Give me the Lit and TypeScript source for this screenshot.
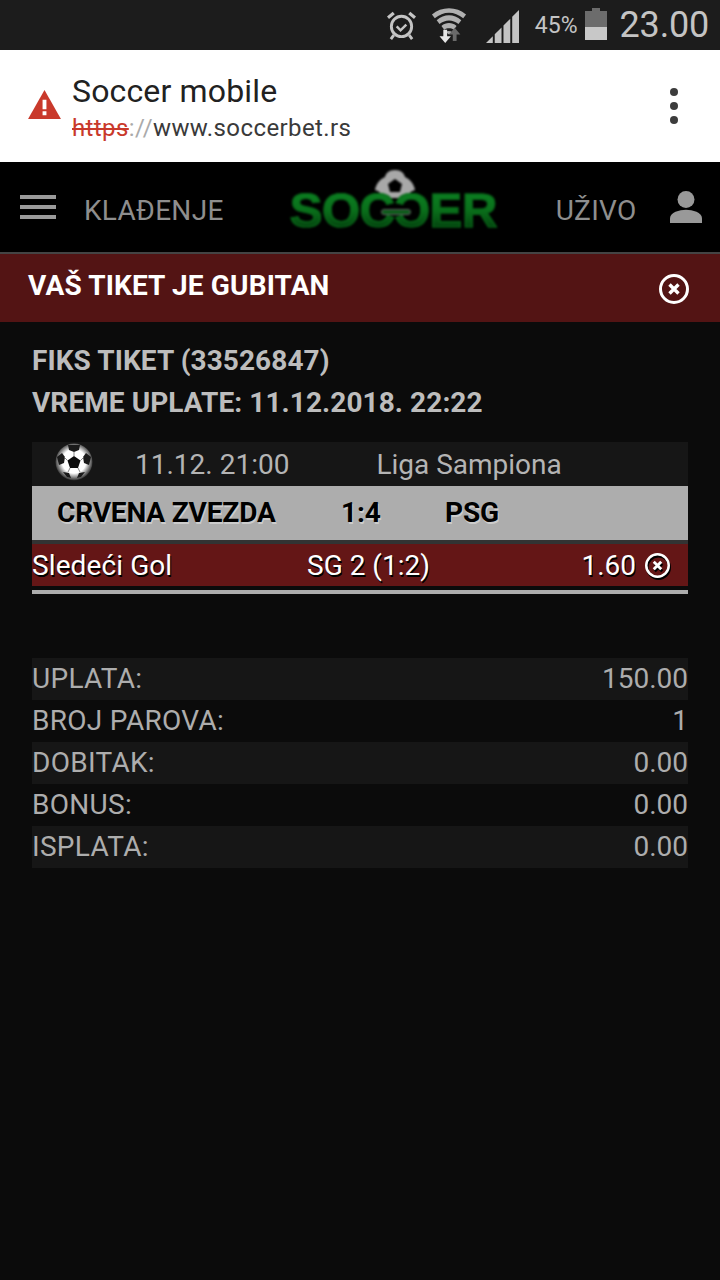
import { LitElement, html, css } from "lit";
import { customElement } from "lit/decorators.js";

const totals = [
  ["UPLATA:", "150.00"],
  ["BROJ PAROVA:", "1"],
  ["DOBITAK:", "0.00"],
  ["BONUS:", "0.00"],
  ["ISPLATA:", "0.00"],
];

const closeIcon = (size: number, stroke: number) => html`
  <svg width=${size} height=${size} viewBox="0 0 30 30">
    <circle cx="15" cy="15" r=${15 - stroke / 2} fill="none" stroke="currentColor" stroke-width=${stroke}></circle>
    <path d="M10.5 10.5l9 9M19.5 10.5l-9 9" fill="none" stroke="currentColor" stroke-width="3.4"></path>
  </svg>
`;

@customElement("app-root")
export class AppRoot extends LitElement {
  static styles = css`
    :host {
      display: block;
      width: 720px;
      height: 1280px;
      overflow: hidden;
      background: #0b0b0b;
      font-family: Roboto, "Liberation Sans", sans-serif;
    }

    .status {
      height: 50px;
      background: #1c1c1c;
      color: #c4c4c4;
      display: flex;
      align-items: center;
      justify-content: flex-end;
      padding-right: 11px;
      box-sizing: border-box;
    }

    .status svg {
      display: block;
      flex: none;
    }

    .alarm { margin-right: 15px; }
    .wifi { margin-right: 19px; }
    .signal { margin-right: 16px; margin-top: 3px; }

    .pct {
      font-size: 23px;
      margin-right: 7px;
      margin-top: 1px;
    }

    .batt { margin-right: 13px; margin-top: -2px; }

    .clock {
      font-size: 36px;
      line-height: 50px;
      letter-spacing: -0.2px;
    }

    .chrome {
      height: 112px;
      background: #fff;
      display: flex;
      align-items: center;
      box-sizing: border-box;
      padding: 0 0 0 28px;
    }

    .chrome .warn {
      flex: none;
      margin-right: 11px;
      margin-top: -4px;
    }

    .titles {
      flex: 1;
      margin-top: 6px;
    }

    .page-title {
      font-size: 32px;
      line-height: 38px;
      color: #212121;
      letter-spacing: 0.15px;
    }

    .url {
      font-size: 24px;
      line-height: 38px;
      color: #3a3a3a;
      letter-spacing: 0.4px;
      margin-top: -1px;
    }

    .url s { color: #c9392b; text-decoration-thickness: 2px; }
    .url i { color: #aaa; font-style: normal; }

    .dots {
      display: flex;
      flex-direction: column;
      gap: 6px;
      margin-right: 42px;
    }

    .dots span {
      width: 8px;
      height: 8px;
      border-radius: 50%;
      background: #3c3c3c;
    }

    .nav {
      height: 90px;
      background: #000;
      border-bottom: 2px solid #444;
      display: flex;
      align-items: center;
      color: #8e8e8e;
      font-size: 28px;
    }

    .nav .label {
      margin-top: 6px;
      letter-spacing: 0.3px;
    }

    .burger {
      width: 36px;
      margin-left: 20px;
      margin-right: 28px;
      display: flex;
      flex-direction: column;
      gap: 6px;
    }

    .burger span {
      height: 4px;
      background: #9a9a9a;
    }

    .logo {
      position: relative;
      flex: none;
      width: 208px;
      height: 58px;
      margin-left: 65px;
      margin-right: 59px;
      margin-top: -17px;
      filter: blur(1.1px);
    }

    .logo svg {
      position: absolute;
      left: 86px;
      top: 0;
    }

    .logo b {
      position: absolute;
      left: 1px;
      bottom: 0;
      width: 208px;
      white-space: nowrap;
      font-family: "Liberation Sans", sans-serif;
      font-weight: 700;
      font-size: 49px;
      line-height: 36px;
      letter-spacing: -0.4px;
    }

    .logo b span {
      display: inline-block;
      background: linear-gradient(#0c7f22, #0a701b 50%, #03420e);
      -webkit-background-clip: text;
      background-clip: text;
      color: transparent;
      -webkit-text-stroke: 1.2px #086618;
    }

    .logo b .flip {
      transform: scaleX(-1);
    }

    .logo i {
      position: absolute;
      left: 92px;
      top: 39px;
      width: 28px;
      height: 4px;
      background: #0a5a18;
      border: 1px solid #666;
      border-radius: 3px;
    }

    .user {
      margin-left: 33px;
    }

    .banner {
      height: 68px;
      background: #531414;
      display: flex;
      align-items: center;
      justify-content: space-between;
      padding: 0 31px 0 28px;
      color: #fff;
      font-size: 28px;
      font-weight: 700;
      letter-spacing: 0.15px;
    }

    .banner span {
      margin-top: -6px;
    }

    .banner svg {
      display: block;
      margin-top: 2px;
    }

    .content {
      padding: 18px 32px 0;
    }

    .info {
      color: #bdbdbd;
      font-size: 28px;
      font-weight: 700;
      line-height: 42px;
      letter-spacing: 0.08px;
    }

    .ticket {
      margin-top: 18px;
    }

    .when {
      height: 44px;
      background: #161616;
      color: #b4b4b4;
      font-size: 28px;
      display: flex;
      align-items: center;
    }

    .when svg {
      margin-left: 23px;
      margin-right: 42px;
      margin-top: -4px;
      flex: none;
      filter: blur(0.4px);
    }

    .when .league {
      margin-left: 87px;
    }

    .match {
      height: 54px;
      background: #adadad;
      border-bottom: 4px solid #333;
      color: #000;
      font-weight: 700;
      font-size: 28px;
      letter-spacing: -0.15px;
      display: flex;
      align-items: center;
      text-shadow: 1px 2px 0 #ccc;
    }

    .match span { margin-top: -2px; }
    .match .home { margin-left: 25px; width: 284px; }
    .match .score { width: 104px; }

    .pick {
      height: 42px;
      background: #641616;
      color: #fff;
      font-size: 28px;
      display: flex;
      align-items: center;
      text-shadow: 1px 2px 0 #000;
    }

    .pick .market { width: 275px; letter-spacing: 0.1px; }
    .pick .odds { margin-left: auto; }

    .pick svg {
      margin: 0 18px 0 9px;
      filter: drop-shadow(1px 2px 0 #000);
    }

    .rule {
      height: 4px;
      margin-top: 4px;
      background: #adadad;
    }

    .totals {
      margin-top: 64px;
    }

    .totals div {
      height: 42px;
      display: flex;
      align-items: center;
      justify-content: space-between;
      color: #adadad;
      font-size: 28px;
    }

    .totals span {
      margin-top: -2px;
    }

    .totals div span:first-child {
      letter-spacing: 0.3px;
    }

    .totals div:nth-child(odd) {
      background: #161616;
    }
  `;

  render() {
    return html`
      <div class="status">
        <svg class="alarm" width="29" height="29" viewBox="0 0 30 30" fill="none" stroke="#c4c4c4">
          <circle cx="15" cy="16" r="10.5" stroke-width="3"></circle>
          <path d="M10 16l4 4 6-6" stroke-width="2.6"></path>
          <path d="M1 7l6-5M29 7l-6-5" stroke-width="3.4"></path>
          <path d="M7 25l-3 4M23 25l3 4" stroke-width="3"></path>
        </svg>
        <svg class="wifi" width="36" height="36" viewBox="0 0 38 38">
          <path d="M1 8C11-1 27-1 37 8l-3 4C25 4 13 4 4 12z" fill="#b0b0b0"></path>
          <path d="M6 14c8-7 18-7 26 0l-3 4c-6-5-14-5-20 0z" fill="#b0b0b0"></path>
          <path d="M11 20c5-4 11-4 16 0l-3 4c-3-2-7-2-10 0z" fill="#b0b0b0"></path>
          <path d="M15 26c2-1 5-1 7 0l-3 3z" fill="#b0b0b0"></path>
          <path d="M13 24h4v7h4l-6 7-6-7h4z" fill="#e6e6e6"></path>
          <path d="M23 36v-7h-4l6-7 6 7h-4v7z" fill="#6a6a6a"></path>
        </svg>
        <svg class="signal" width="33" height="33" viewBox="0 0 34 34" fill="#c4c4c4">
          <path d="M0 34l7-7v7zM9 25l7-7v16H9zM18 16l7-7v25h-7zM27 7l7-7v34h-7z"></path>
        </svg>
        <span class="pct">45%</span>
        <svg class="batt" width="22" height="32" viewBox="0 0 22 32">
          <path d="M7 0h8v3h7v16H0V3h7z" fill="#6c6c6c"></path>
          <rect y="19" width="22" height="13" fill="#c8c8c8"></rect>
        </svg>
        <span class="clock">23.00</span>
      </div>

      <div class="chrome">
        <svg class="warn" width="33" height="29" viewBox="0 0 34 30">
          <path d="M17 0l17 30H0z" fill="#c9392b"></path>
          <path d="M15 10h4v10h-4zM15 22h4v4h-4z" fill="#fff"></path>
        </svg>
        <div class="titles">
          <div class="page-title">Soccer mobile</div>
          <div class="url"><s>https</s><i>://</i>www.soccerbet.rs</div>
        </div>
        <div class="dots"><span></span><span></span><span></span></div>
      </div>

      <div class="nav">
        <div class="burger"><span></span><span></span><span></span></div>
        <span class="label">KLAĐENJE</span>
        <div class="logo">
          <svg width="40" height="30" viewBox="0 0 40 30">
            <path d="M20 0c6 0 9 3 10 7 5 2 9 7 10 13-4 1-7 4-10 8H10C7 24 4 21 0 20 1 14 5 9 10 7c1-4 4-7 10-7z" fill="#a8a8a8"></path>
            <path d="M20 9l7 5-2 8H15l-2-8z" fill="#000"></path>
          </svg>
          <b><span>SOC</span><span class="flip">C</span><span>ER</span></b>
          <i></i>
        </div>
        <span class="label">UŽIVO</span>
        <svg class="user" width="32" height="32" viewBox="0 0 34 34" fill="#999">
          <circle cx="17" cy="9" r="9"></circle>
          <path d="M0 34v-5c0-6 10-9 17-9s17 3 17 9v5z"></path>
        </svg>
      </div>

      <div class="banner">
        <span>VAŠ TIKET JE GUBITAN</span>
        ${closeIcon(30, 3)}
      </div>

      <div class="content">
        <div class="info">FIKS TIKET (33526847)</div>
        <div class="info">VREME UPLATE: 11.12.2018. 22:22</div>

        <div class="ticket">
          <div class="when">
            <svg width="38" height="38" viewBox="0 0 38 38">
              <defs>
                <radialGradient id="ball" cx="50%" cy="48%" r="52%">
                  <stop offset="0.62" stop-color="#fff"></stop>
                  <stop offset="1" stop-color="#2a2a2a"></stop>
                </radialGradient>
              </defs>
              <circle cx="19" cy="19" r="18.5" fill="url(#ball)"></circle>
              <path d="M19 13l6.5 4.5-2.5 7.5h-8l-2.5-7.5z" fill="#0c0c0c"></path>
              <path d="M13 2h12l-1 5-5 2-5-2zM2 14l5-4 3 4-1 6-5 2zM36 14l-5-4-3 4 1 6 5 2zM8 29l6 1 2 5-4-1zM30 29l-6 1-2 5 4-1z" fill="#1a1a1a"></path>
              <path d="M19 9v4M25.5 17.500l3-3M12.500 17.500l-3-3M15 25l-2 4M23 25l2 4" stroke="#888" stroke-width="1"></path>
            </svg>
            <span>11.12. 21:00</span>
            <span class="league">Liga Sampiona</span>
          </div>
          <div class="match">
            <span class="home">CRVENA ZVEZDA</span>
            <span class="score">1:4</span>
            <span>PSG</span>
          </div>
          <div class="pick">
            <span class="market">Sledeći Gol</span>
            <span>SG 2 (1:2)</span>
            <span class="odds">1.60</span>
            ${closeIcon(25, 3)}
          </div>
          <div class="rule"></div>
        </div>

        <div class="totals">
          ${totals.map(([k, v]) => html`<div><span>${k}</span><span>${v}</span></div>`)}
        </div>
      </div>
    `;
  }
}
